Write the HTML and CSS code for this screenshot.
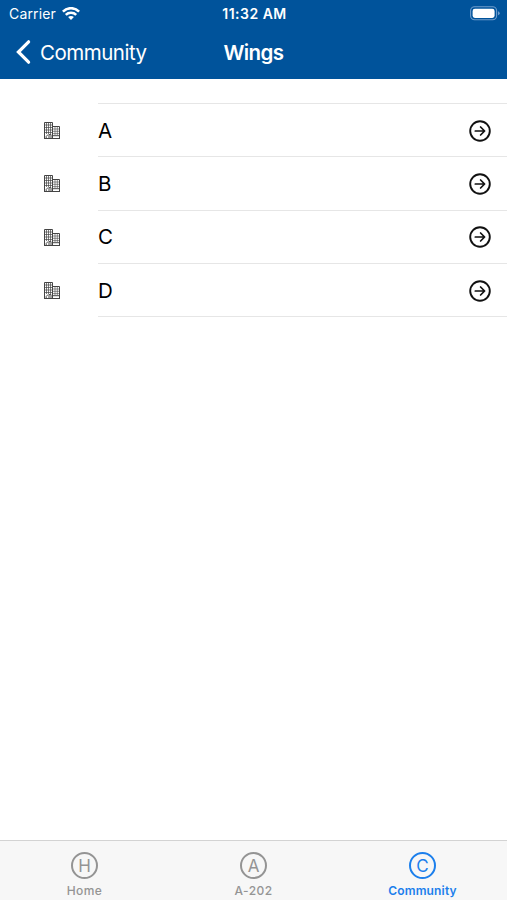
FILE: index.html
```html
<!DOCTYPE html>
<html lang="en">
<head>
<meta charset="utf-8">
<title>Wings</title>
<link rel="stylesheet" href="styles.css">
</head>
<body>
<svg class="defs" width="0" height="0" aria-hidden="true">
  <symbol id="building" viewBox="0 0 18 19">
    <g fill="none" stroke="#444" stroke-width="1">
      <path d="M1.5 17.5V1.5H9.5V17.5M9.5 5.5H16.5V17.5M1 17.5H17"/>
      <path d="M3.5 2V13M5.5 2V13M7.5 2V13M2 4H9M2 6.5H9M2 9H9M2 11.5H9" stroke-width=".7"/>
      <path d="M12 6V14M14.3 6V14M10 8H16M10 10.3H16M10 12.6H16" stroke-width=".6"/>
      <path d="M3.2 17V15.5L5 13.5M6 17V13.6H8V17M10 14.7H16" stroke-width="1"/>
    </g>
  </symbol>
  <symbol id="go" viewBox="0 0 22 22">
    <g fill="none" stroke="#111" stroke-width="1.9" stroke-linecap="round" stroke-linejoin="round">
      <circle cx="11" cy="11" r="9.8"/>
      <path d="M6.3 11H15.5M11.6 7L15.6 11L11.6 15" stroke-width="1.7"/>
    </g>
  </symbol>
</svg>
<header class="header">
  <div class="status">
    <div class="carrier"><span>Carrier</span>
      <svg width="18" height="14" viewBox="0 0 18 14" fill="none" stroke="#fff" stroke-width="2.5">
        <path d="M.9 4.6C5.4 0 12.6 0 17.1 4.6M3.8 7.9C6.6 5.1 11.4 5.1 14.2 7.9"/>
        <path d="M9 13L6.1 10.1C7.7 8.6 10.3 8.6 11.9 10.1Z" fill="#fff" stroke="none"/>
      </svg>
    </div>
    <div class="time">11:32 AM</div>
    <svg class="battery" width="30" height="15" viewBox="0 0 30 15">
      <rect x=".6" y=".8" width="26" height="13" rx="4" fill="none" stroke="#6f9dcc" stroke-width="1.1"/>
      <rect x="2.6" y="2.7" width="22" height="9.2" rx="2.3" fill="#fff"/>
      <path d="M28 5.3Q29.7 6 29.7 7.3Q29.7 8.6 28 9.3Z" fill="#6f9dcc"/>
    </svg>
  </div>
  <nav class="navbar">
    <a class="back">
      <svg width="16" height="26" viewBox="0 0 16 26" fill="none" stroke="#fff" stroke-width="3.2" stroke-linecap="round"><path d="M13.6 2.8L3.4 13L13.6 23.2"/></svg>
      <span>Community</span>
    </a>
    <h1 class="title">Wings</h1>
  </nav>
</header>
<main class="content">
  <ul class="wings">
    <li class="wing"><svg class="building"><use href="#building"/></svg><div class="cell"><span>A</span><svg class="go"><use href="#go"/></svg></div></li>
    <li class="wing"><svg class="building"><use href="#building"/></svg><div class="cell"><span>B</span><svg class="go"><use href="#go"/></svg></div></li>
    <li class="wing"><svg class="building"><use href="#building"/></svg><div class="cell"><span>C</span><svg class="go"><use href="#go"/></svg></div></li>
    <li class="wing"><svg class="building"><use href="#building"/></svg><div class="cell"><span>D</span><svg class="go"><use href="#go"/></svg></div></li>
  </ul>
</main>
<footer class="tabs">
  <a class="tab"><span class="badge">H</span><span class="label">Home</span></a>
  <a class="tab"><span class="badge">A</span><span class="label">A-202</span></a>
  <a class="tab active"><span class="badge">C</span><span class="label">Community</span></a>
</footer>
</body>
</html>
```

FILE: styles.css
```css
* { box-sizing: border-box; }
body {
  margin: 0;
  height: 900px;
  display: flex;
  flex-direction: column;
  overflow: hidden;
  background: #fff;
  color: #000;
  font-family: Inter, "Liberation Sans", sans-serif;
}
svg { display: block; flex: none; }
.defs { position: absolute; }
.header {
  height: 79px;
  flex: none;
  background: #00539b;
  color: #fff;
}
.status, .navbar {
  display: grid;
  grid-template-columns: 1fr auto 1fr;
  align-items: center;
}
.status { height: 27px; padding: 0 7px 0 9px; }
.carrier {
  display: flex;
  align-items: center;
  gap: 6px;
  font-size: 14px;
  line-height: 20px;
  letter-spacing: 0.15px;
}
.time { font-size: 14px; line-height: 20px; font-weight: 600; letter-spacing: 0.5px; }
.battery { justify-self: end; }
.navbar { height: 52px; padding: 0 15px; }
.back {
  display: flex;
  align-items: center;
  gap: 9px;
  font-size: 20.5px;
  line-height: 26px;
  letter-spacing: -0.5px;
}
.back svg { margin-top: -2px; }
.title { margin: 0; font-size: 20.5px; line-height: 26px; font-weight: 600; letter-spacing: -0.6px; }
.content { flex: 1; padding-top: 24px; }
.wings { margin: 0; padding: 0; list-style: none; }
.wing { display: flex; align-items: center; height: 53.3px; padding-left: 43px; }
.building { width: 18px; height: 19px; margin: 2px 37px 0 0; }
.cell {
  flex: 1;
  height: 100%;
  display: flex;
  align-items: center;
  justify-content: space-between;
  padding-right: 16px;
  border-top: 1px solid #e6e6e6;
  font-size: 20.5px;
}
.wing:last-child .cell { box-shadow: 0 1px #e6e6e6; }
.go { width: 22px; height: 22px; margin-top: 1px; }
.tabs {
  height: 60px;
  flex: none;
  display: grid;
  grid-template-columns: repeat(3, 1fr);
  border-top: 1px solid #d3d3d3;
  background: #f7f7f7;
}
.tab {
  display: flex;
  flex-direction: column;
  align-items: center;
  padding-top: 11px;
  color: #949494;
}
.badge {
  width: 27px;
  height: 27px;
  display: flex;
  align-items: center;
  justify-content: center;
  border: 2px solid;
  border-radius: 50%;
  font-size: 17px;
  line-height: 20px;
}
.label { margin-top: 4px; font-size: 12px; line-height: 16px; font-weight: 500; letter-spacing: 0.45px; }
.active { color: #1c7fec; }
.active .label { font-weight: 600; letter-spacing: 0.15px; }
```
